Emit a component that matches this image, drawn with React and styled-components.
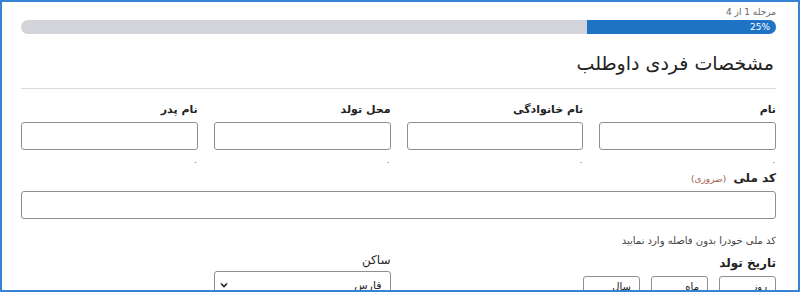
import styled, { createGlobalStyle } from "styled-components";

const GlobalStyle = createGlobalStyle`
  html, body {
    margin: 0;
    padding: 0;
    background: #fff;
  }
  * {
    box-sizing: border-box;
  }
`;

const topFields = [
  { label: "نام" },
  { label: "نام خانوادگی" },
  { label: "محل تولد" },
  { label: "نام پدر" },
];

export default function App() {
  return (
    <>
      <GlobalStyle />
      <Frame dir="rtl">
        <StepText>مرحله 1 از 4</StepText>
        <Track>
          <Fill style={{ width: "25%" }}>25%</Fill>
        </Track>

        <Title>مشخصات فردی داوطلب</Title>
        <Divider />

        <Grid>
          {topFields.map((f) => (
            <Field key={f.label}>
              <Label>{f.label}</Label>
              <Input />
              <Hint>.</Hint>
            </Field>
          ))}
        </Grid>

        <WideField>
          <Label $big>
            کد ملی <Required>(ضروری)</Required>
          </Label>
          <Input />
          <Help>کد ملی خودرا بدون فاصله وارد نمایید</Help>
        </WideField>

        <Grid $top={6}>
          <Field $span={2}>
            <Label $big>تاریخ تولد</Label>
            <DateRow>
              <SmallSelect>روز</SmallSelect>
              <SmallSelect>ماه</SmallSelect>
              <SmallSelect>سال</SmallSelect>
            </DateRow>
          </Field>
          <Field>
            <Label $light>ساکن</Label>
            <Select>
              <span>فارس</span>
              <Chevron viewBox="0 0 10 10">
                <path d="M2 3.5 L5 6.5 L8 3.5" />
              </Chevron>
            </Select>
          </Field>
        </Grid>
      </Frame>
    </>
  );
}

const Frame = styled.div`
  height: 292px;
  overflow: hidden;
  border: 2px solid #3584d4;
  padding: 3px 22px 0 19px;
  font-family: "DejaVu Sans", "Noto Sans", sans-serif;
  color: #222;
`;

const StepText = styled.div`
  font-size: 9px;
  line-height: 14px;
  color: #666;
`;

const Track = styled.div`
  margin-top: 1px;
  height: 14px;
  border-radius: 7px;
  background: #d3d4d9;
  overflow: hidden;
  display: flex;
`;

const Fill = styled.div`
  background: #1e73c4;
  color: #fff;
  font-size: 9px;
  line-height: 14px;
  padding-right: 6px;
`;

const Title = styled.h1`
  margin: 14px 2px 0 0;
  font-size: 19px;
  font-weight: normal;
  line-height: 30px;
  color: #222;
`;

const Divider = styled.hr`
  margin: 10px 0 0;
  border: 0;
  border-top: 1px solid #dcdcdc;
`;

const Grid = styled.div`
  display: grid;
  grid-template-columns: repeat(4, 1fr);
  column-gap: 16px;
  margin-top: ${(p) => (p.$top != null ? p.$top : 13)}px;
`;

const Field = styled.div`
  display: flex;
  flex-direction: column;
  grid-column: span ${(p) => p.$span || 1};
`;

const WideField = styled.div`
  display: flex;
  flex-direction: column;
  margin-top: 4px;
`;

const Label = styled.label`
  font-size: ${(p) => (p.$light ? 12 : p.$big ? 12 : 11)}px;
  line-height: 16px;
  font-weight: ${(p) => (p.$light ? "normal" : "bold")};
  margin-top: ${(p) => (p.$light ? -3 : 0)}px;
  margin-bottom: ${(p) => (p.$light ? 3 : 4)}px;
  color: #222;
`;

const Required = styled.span`
  font-size: 9px;
  font-weight: normal;
  color: #a0604a;
  margin-right: 3px;
`;

const Input = styled.div`
  height: 28px;
  border: 1px solid #8f8f8f;
  border-radius: 3px;
  background: #fff;
`;

const Hint = styled.span`
  font-size: 9px;
  line-height: 12px;
  color: #666;
  margin-top: 4px;
  padding-right: 1px;
`;

const Help = styled.span`
  font-size: 10px;
  line-height: 16px;
  color: #444;
  margin-top: 14px;
`;

const DateRow = styled.div`
  display: flex;
  gap: 11px;
  margin-top: 1px;
`;

const SmallSelect = styled.div`
  width: 57px;
  height: 28px;
  border: 1px solid #8f8f8f;
  border-radius: 3px;
  font-size: 10px;
  line-height: 12px;
  padding: 4px 8px 0;
`;

const Select = styled.div`
  height: 28px;
  border: 1px solid #8f8f8f;
  border-radius: 3px;
  display: flex;
  align-items: center;
  justify-content: space-between;
  padding: 0 8px 0 4px;
  font-size: 11px;
`;

const Chevron = styled.svg`
  width: 10px;
  height: 10px;
  fill: none;
  stroke: #222;
  stroke-width: 1.6;
`;
